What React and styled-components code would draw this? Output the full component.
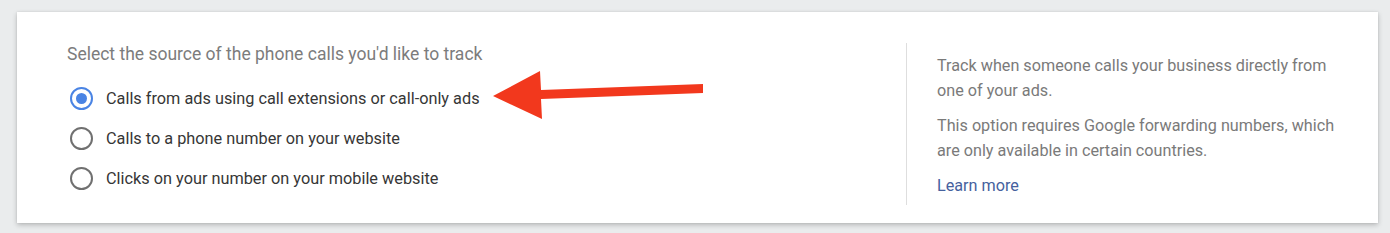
import React from 'react';
import styled, { createGlobalStyle } from 'styled-components';

const GlobalStyle = createGlobalStyle`
  body {
    margin: 0;
    background: #eaeced;
    font-family: Roboto, "Noto Sans", Arial, sans-serif;
  }
`;

const options = [
  { id: 'ads', label: 'Calls from ads using call extensions or call-only ads', checked: true },
  { id: 'site', label: 'Calls to a phone number on your website' },
  { id: 'mobile', label: 'Clicks on your number on your mobile website' },
];

const App = () => {
  return (
    <Page>
      <GlobalStyle />
      <Card>
        <SourceColumn>
          <Title>Select the source of the phone calls you'd like to track</Title>
          <OptionList>
            {options.map((o) => (
              <OptionRow key={o.id}>
                <Radio $checked={o.checked} />
                <OptionLabel>{o.label}</OptionLabel>
              </OptionRow>
            ))}
          </OptionList>
        </SourceColumn>
        <HelpColumn>
          <HelpText>Track when someone calls your business directly from one of your ads.</HelpText>
          <HelpText>This option requires Google forwarding numbers, which are only available in certain countries.</HelpText>
          <LearnMore href="#">Learn more</LearnMore>
        </HelpColumn>

        {/* annotation arrow drawn over the card */}
        <Arrow viewBox="0 0 216 54" width="216" height="54">
          <polygon
            points="3,28 50,3 51,22 213,16 213,25 51,31 52,51"
            fill="#f2381d"
          />
        </Arrow>
      </Card>
    </Page>
  );
};

export default App;

const Page = styled.div`
  padding: 12px 12px 10px 17px;
`;

const Card = styled.div`
  position: relative;
  display: flex;
  width: 1361px;
  height: 211px;
  box-sizing: border-box;
  background: #fff;
  box-shadow: 0 2px 5px rgba(0, 0, 0, 0.22), 0 0 2px rgba(0, 0, 0, 0.08);
`;

const SourceColumn = styled.div`
  flex: 1;
  padding: 30px 0 0 50px;
`;

const Title = styled.div`
  font-size: 17.5px;
  line-height: 24px;
  color: #7c7c7c;
`;

const OptionList = styled.div`
  margin-top: 12px;
`;

const OptionRow = styled.div`
  display: flex;
  align-items: center;
  height: 40px;
`;

const Radio = styled.span`
  position: relative;
  flex: none;
  width: 23px;
  height: 23px;
  margin-left: 3px;
  box-sizing: border-box;
  border-radius: 50%;
  border: 2px solid ${(p) => (p.$checked ? '#4a84e4' : '#707070')};
  &::after {
    content: '';
    display: ${(p) => (p.$checked ? 'block' : 'none')};
    position: absolute;
    left: 50%;
    top: 50%;
    width: 11px;
    height: 11px;
    margin: -5.5px 0 0 -5.5px;
    border-radius: 50%;
    background: #4a84e4;
  }
`;

const OptionLabel = styled.span`
  margin-left: 13px;
  font-size: 16.3px;
  color: #363636;
`;

const HelpColumn = styled.div`
  width: 472px;
  box-sizing: border-box;
  margin: 31px 0 18px;
  padding: 10px 30px 0 30px;
  border-left: 1px solid #dedede;
`;

const HelpText = styled.p`
  margin: 0 0 10px;
  font-size: 16.2px;
  line-height: 25px;
  color: #7a7a7a;
`;

const LearnMore = styled.a`
  display: block;
  font-size: 16.2px;
  line-height: 25px;
  color: #46619e;
  text-decoration: none;
`;

const Arrow = styled.svg`
  position: absolute;
  left: 473px;
  top: 56px;
`;
